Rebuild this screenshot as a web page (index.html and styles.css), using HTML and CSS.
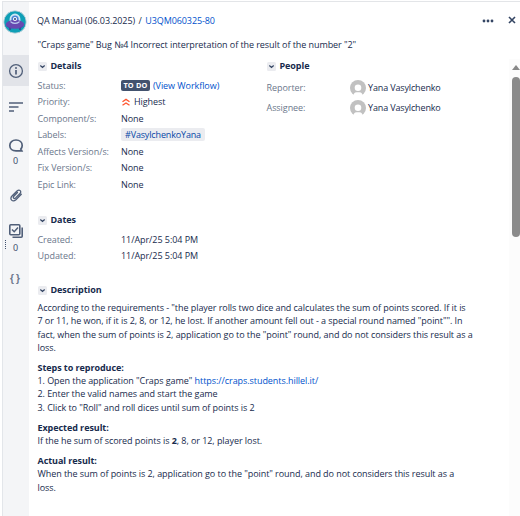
FILE: index.html
```html
<!DOCTYPE html>
<html lang="en">
<head>
<meta charset="utf-8">
<title>U3QM060325-80</title>
<link rel="stylesheet" href="styles.css">
</head>
<body>
<div class="panel">
  <nav class="rail">
    <svg class="avatar" viewBox="0 0 24 24"><circle cx="12" cy="12" r="11.2" fill="#0f9fb6" stroke="#cfd6de" stroke-width=".8"/><path d="M7 16v4M17 16v4" stroke="#403294" stroke-width="1.4"/><path d="M6.600 12V9a5.400 5.400 0 0 1 10.800 0v3Z" fill="#cce7f4"/><path d="M8.400 12V9a3.600 3.600 0 0 1 7.200 0v3Z" fill="#4b82d4"/><ellipse cx="12" cy="14.4" rx="9.3" ry="4.3" fill="#6849b0"/><path d="M3.400 16Q12 21 20.600 16Q18 18.500 12 18.500T3.400 16" fill="#4b2ba0"/><path d="M7.500 11Q12 14.500 16.500 11V12.500Q12 15.500 7.500 12.500Z" fill="#b9c9ee"/><circle cx="12" cy="9" r="2" fill="#fff"/><circle cx="12" cy="9.100" r="1" fill="#253f78"/></svg>
    <div class="tab active"><svg class="i16" viewBox="0 0 16 16"><circle cx="8" cy="8" r="6.4" fill="none" stroke="#505f79" stroke-width="1.3"/><circle cx="8" cy="5" r="1" fill="#505f79"/><path d="M8 7v4.5" stroke="#505f79" stroke-width="1.7"/></svg></div>
    <div class="tab lines"><svg class="i16" viewBox="0 0 16 16"><path d="M1 4h14M1 8h9.5M1 12h5" stroke="#505f79" stroke-width="1.7"/></svg></div>
    <div class="tab comments"><svg class="i16" viewBox="0 0 16 16"><path d="M8 2C4.200 2 1.800 4.300 1.800 7.400S4.200 12.800 8 12.800H13.800L12.800 11C13.700 10 14.200 8.800 14.200 7.400C14.200 4.300 11.800 2 8 2Z" fill="none" stroke="#505f79" stroke-width="1.7"/></svg><span class="count">0</span></div>
    <div class="tab clip"><svg class="i16" viewBox="0 0 16 16"><path d="M13.300 7.300L7.900 12.700C4.700 15.700 1 12 4 9L9 4C11.500 1.700 14 4.500 12 6.500L7.600 10.900C6 12.300 4.400 10.700 5.800 9.200L9.500 5.500" fill="none" stroke="#505f79" stroke-width="1.300" stroke-linecap="round"/></svg></div>
    <div class="tab tasks"><svg class="i16" viewBox="0 0 16 16"><rect x="1.800" y="1.800" width="10" height="10" rx="1" fill="none" stroke="#505f79" stroke-width="1.600"/><path d="M4 6.500L6.200 8.700L10 4.500" fill="none" stroke="#505f79" stroke-width="1.500"/><path d="M14.200 4.500V13.200Q14.200 14.200 13.200 14.200H4.500" fill="none" stroke="#505f79" stroke-width="1.600"/></svg><span class="count">0</span></div>
    <div class="tab braces">{}</div>
    <i class="grip"></i>
  </nav>
  <main class="main">
    <header class="head">
      <div class="crumbs"><span>QA Manual (06.03.2025)</span><span class="slash">/</span><a>U3QM060325-80</a></div>
      <div class="tools"><svg class="dots" viewBox="0 0 12 4"><circle cx="2" cy="2" r="1.400"/><circle cx="6" cy="2" r="1.400"/><circle cx="10" cy="2" r="1.400"/></svg><svg class="close" viewBox="0 0 8 8"><path d="M1 1L7 7M7 1L1 7"/></svg></div>
    </header>
    <h1 class="title">"Craps game" Bug <span class="numero">№</span>4 Incorrect interpretation of the result of the number "2"</h1>
    <div class="body">
      <div class="content">
        <div class="columns">
          <section class="details">
            <h2><span class="toggle"><svg viewBox="0 0 10 10"><path d="M2.600 3.900L5 6L7.400 3.900"/></svg></span>Details</h2>
            <dl>
              <div><dt>Status:</dt><dd><b class="lozenge">TO DO</b><a class="flow">(View Workflow)</a></dd></div>
              <div><dt>Priority:</dt><dd><svg class="prio" viewBox="0 0 10 10"><path d="M1.500 4.700L5 2.400L8.500 4.700M1.500 8.300L5 6L8.500 8.300"/></svg>Highest</dd></div>
              <div><dt>Component/s:</dt><dd>None</dd></div>
              <div><dt>Labels:</dt><dd><a class="tag">#VasylchenkoYana</a></dd></div>
              <div><dt>Affects Version/s:</dt><dd>None</dd></div>
              <div><dt>Fix Version/s:</dt><dd>None</dd></div>
              <div><dt>Epic Link:</dt><dd>None</dd></div>
            </dl>
          </section>
          <section class="people">
            <h2><span class="toggle"><svg viewBox="0 0 10 10"><path d="M2.600 3.900L5 6L7.400 3.900"/></svg></span>People</h2>
            <dl>
              <div><dt>Reporter:</dt><dd><svg class="face" viewBox="0 0 16 16"><circle cx="8" cy="8" r="8" fill="#c1c1c1"/><circle cx="8" cy="7.700" r="3.300" fill="#fff"/><path d="M3.500 16Q3.500 12.300 6.500 12.300H9.500Q12.500 12.300 12.500 16Z" fill="#fff"/></svg>Yana Vasylchenko</dd></div>
              <div><dt>Assignee:</dt><dd><svg class="face" viewBox="0 0 16 16"><circle cx="8" cy="8" r="8" fill="#c1c1c1"/><circle cx="8" cy="7.700" r="3.300" fill="#fff"/><path d="M3.500 16Q3.500 12.300 6.500 12.300H9.500Q12.500 12.300 12.500 16Z" fill="#fff"/></svg>Yana Vasylchenko</dd></div>
            </dl>
          </section>
        </div>
        <section class="dates">
          <h2><span class="toggle"><svg viewBox="0 0 10 10"><path d="M2.600 3.900L5 6L7.400 3.900"/></svg></span>Dates</h2>
          <dl>
            <div><dt>Created:</dt><dd>11/Apr/25 5:04 PM</dd></div>
            <div><dt>Updated:</dt><dd>11/Apr/25 5:04 PM</dd></div>
          </dl>
        </section>
        <section class="description">
          <h2><span class="toggle"><svg viewBox="0 0 10 10"><path d="M2.600 3.900L5 6L7.400 3.900"/></svg></span>Description</h2>
          <p>According to the requirements - "the player rolls two dice and calculates the sum of points scored. If it is<br>7 or 11, he won, if it is 2, 8, or 12, he lost. If another amount fell out - a special round named "point"". In<br>fact, when the sum of points is 2, application go to the "point" round, and do not considers this result as a<br>loss.</p>
          <p><b>Steps to reproduce:</b><br>1. Open the application "Craps game" <a>https://craps.students.hillel.it/</a><br>2. Enter the valid names and start the game<br>3. Click to "Roll" and roll dices until sum of points is 2</p>
          <p><b>Expected result:</b><br>If the he sum of scored points is <b>2</b>, 8, or 12, player lost.</p>
          <p><b>Actual result:</b><br>When the sum of points is 2, application go to the "point" round, and do not considers this result as a<br>loss.</p>
        </section>
      </div>
      <div class="scroll"><i class="up"></i><i class="thumb"></i></div>
    </div>
  </main>
</div>
</body>
</html>
```
FILE: styles.css
```css
* { box-sizing: border-box; }
body { margin: 0; background: #fff; color: #172b4d; font: 9px/13.3px "Open Sans", "Noto Sans", sans-serif; letter-spacing: -.06px; }
h1, h2, p, dl, dd, dt { margin: 0; font-size: inherit; font-weight: 400; }
a { color: #0052cc; }
b { font-weight: 700; }
.panel { width: 520px; height: 516px; padding-left: 2px; overflow: hidden; display: flex; border-top: 1px solid #fff; }
.rail { position: relative; width: 27px; flex: none; background: #f4f5f7; border-left: 1px solid #e3e6ea; border-top: 1px solid #e3e5e8; display: flex; flex-direction: column; align-items: flex-start; }
.avatar { width: 24px; height: 24px; margin-top: 8px; flex: none; }
.i16 { width: 16px; height: 16px; display: block; }
.tab { width: 26px; padding-right: 1px; flex: none; display: flex; flex-direction: column; align-items: center; color: #42526e; }
.active { height: 31px; margin-top: 21px; background: #e2e4e9; justify-content: center; }
.lines { margin-top: 13px; }
.comments { margin-top: 23px; }
.count { font: 9px/10px "Noto Sans", sans-serif; margin-top: 2px; }
.clip { margin-top: 21px; }
.tasks { margin-top: 20px; }
.tasks .count { margin-top: 4px; }
.braces { margin-top: 19px; font: 700 10px/14px "Liberation Sans", sans-serif; letter-spacing: 2px; padding-left: 1px; color: #6b778c; }
.grip { position: absolute; left: 2px; top: 238px; height: 9px; border-left: 1px dotted #42526e; }
.main { flex: 1; border-top: 1px solid #e3e5e8; min-width: 0; }
.head { display: flex; justify-content: space-between; height: 36px; padding: 12px 4px 0 8px; }
.crumbs { display: flex; gap: 3.500px; letter-spacing: -.09px; }
.tools { display: flex; gap: 14px; padding-top: 2px; }
.dots { width: 12px; height: 4px; margin-top: 3px; fill: #344563; }
.close { width: 8px; height: 8px; fill: none; stroke: #344563; stroke-width: 1.6; }
.title { height: 21px; padding-left: 8.500px; letter-spacing: -.07px; }
.numero { font-family: "Noto Sans", sans-serif; }
.body { display: flex; height: 457px; }
.content { flex: 1; padding-left: 8.500px; white-space: nowrap; }
.columns { display: flex; height: 154px; }
.details { width: 229px; }
h2 { display: flex; align-items: center; gap: 4px; height: 14px; font-weight: 700; }
.toggle { width: 9px; height: 9px; background: #ebecf0; border-radius: 1.5px; }
.toggle svg { display: block; width: 9px; height: 9px; fill: none; stroke: #344563; stroke-width: 1.4; }
dl { padding-top: 4.200px; }
dl > div { display: flex; height: 16.500px; align-items: center; }
dt { width: 83.500px; color: #6b778c; }
dd { display: flex; align-items: center; }
.lozenge { background: #42526e; color: #fff; width: 29px; height: 11px; border-radius: 2px; font-size: 7.300px; line-height: 10px; text-align: center; letter-spacing: .2px; }
.flow { margin-left: 3px; }
.prio { width: 10px; height: 10px; margin-right: 3px; fill: none; stroke: #ff5630; stroke-width: 1.3; }
.tag { background: #ebecf0; border-radius: 2px; height: 13px; line-height: 13px; padding: 0 4px; color: #0747a6; letter-spacing: -.15px; }
.people dl { padding-top: 5px; }
.people dl > div { height: 20px; }
.people dt { width: 83px; }
.people dd { letter-spacing: -.14px; }
.face { width: 16px; height: 16px; margin-right: 2.500px; }
.dates { height: 70px; }
.description p { margin-bottom: 6.700px; }
.description h2 { margin-bottom: 4px; }
.scroll { width: 11px; flex: none; background: #fcfcfc; display: flex; flex-direction: column; align-items: flex-end; padding-top: 6px; }
.up { border: 4px solid transparent; border-top: 0; border-bottom: 5px solid #888; }
.thumb { width: 8px; height: 160px; margin-top: 7px; background: #8b8b8b; border-radius: 4px; }
```
